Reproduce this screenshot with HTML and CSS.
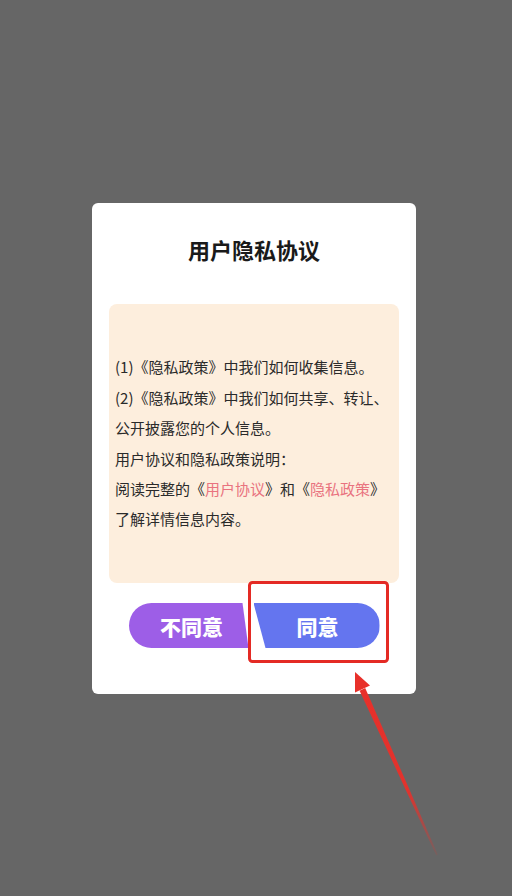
FILE: index.html
```html
<!DOCTYPE html>
<html lang="zh">
<head>
<meta charset="utf-8">
<link rel="stylesheet" href="styles.css">
</head>
<body>
<div class="dialog">
  <h1 class="title">用户隐私协议</h1>
  <div class="content">
    <p class="line">(1)《隐私政策》中我们如何收集信息。</p>
    <p class="line">(2)《隐私政策》中我们如何共享、转让、</p>
    <p class="line">公开披露您的个人信息。</p>
    <p class="line">用户协议和隐私政策说明：</p>
    <p class="line">阅读完整的《<span class="link">用户协议</span>》和《<span class="link">隐私政策</span>》</p>
    <p class="line">了解详情信息内容。</p>
  </div>
  <div class="actions">
    <div class="btn btn-no">不同意</div>
    <div class="btn btn-yes">同意</div>
  </div>
</div>
<svg class="annot" width="512" height="896" viewBox="0 0 512 896">
  <defs>
    <linearGradient id="fade" gradientUnits="userSpaceOnUse" x1="362" y1="689" x2="438" y2="856">
      <stop offset="0" stop-color="#e8302a" stop-opacity="1"/>
      <stop offset="0.6" stop-color="#e8302a" stop-opacity="0.95"/>
      <stop offset="1" stop-color="#e8302a" stop-opacity="0.1"/>
    </linearGradient>
  </defs>
  <rect x="249.5" y="582.5" width="138" height="79" rx="3" ry="3" fill="none" stroke="#e42a24" stroke-width="3"/>
  <polygon points="365.2,688.0 359.6,690.8 436.3,855.4 437.7,854.6" fill="url(#fade)"/>
  <polygon points="355,672 370,685.5 355,692.5" fill="#e8302a"/>
</svg>
</body>
</html>
```
FILE: styles.css
```css
html, body {
  margin: 0;
  padding: 0;
}
body {
  width: 512px;
  height: 896px;
  background: #666666;
  font-family: "Noto Sans CJK SC", "Noto Sans", sans-serif;
  overflow: hidden;
  position: relative;
}
.dialog {
  width: 324px;
  height: 491px;
  margin: 203px 0 0 92px;
  background: #ffffff;
  border-radius: 6px;
  box-sizing: border-box;
  padding-top: 32px;
  display: flex;
  flex-direction: column;
  align-items: center;
}
.title {
  margin: 0;
  font-size: 22px;
  line-height: 29px;
  font-weight: 700;
  color: #1a1a1a;
}
.content {
  margin-top: 40px;
  width: 290px;
  height: 279px;
  box-sizing: border-box;
  background: #fdeedd;
  border-radius: 8px;
  padding: 0 0 0 6px;
  display: flex;
  flex-direction: column;
  justify-content: center;
}
.line {
  margin: 0;
  font-size: 15px;
  line-height: 30.4px;
  color: #2a2a2a;
  white-space: nowrap;
}
.link {
  color: #e9737f;
}
.actions {
  margin-top: 20px;
  display: flex;
  gap: 5px;
  width: 251px;
}
.btn {
  height: 45px;
  display: flex;
  align-items: center;
  justify-content: center;
  color: #ffffff;
  font-size: 21px;
  font-weight: 900;
  box-sizing: border-box;
}
.btn-no {
  width: 120px;
  background: #9d5ee7;
  border-radius: 22.5px 0 0 22.5px;
  clip-path: polygon(0 0, 114px 0, 120px 100%, 0 100%);
  padding-left: 6px;
}
.btn-yes {
  width: 126px;
  background: #6475ef;
  border-radius: 0 22.5px 22.5px 0;
  clip-path: polygon(0 0, 100% 0, 100% 100%, 12px 100%);
  padding-left: 2px;
}
.annot {
  position: absolute;
  left: 0;
  top: 0;
  pointer-events: none;
}
```
